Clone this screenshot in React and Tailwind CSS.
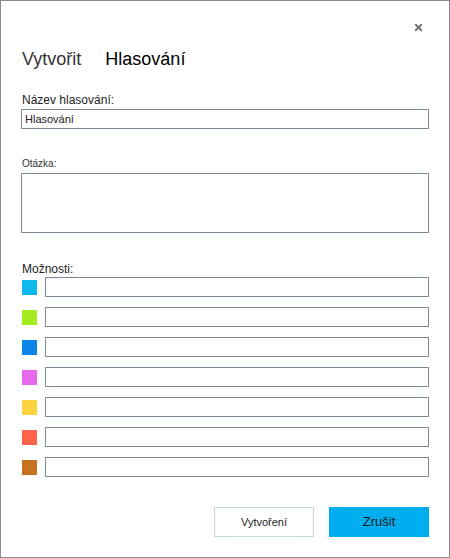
import { X } from 'lucide-react';

const optionColors = ['#0dbaeb', '#a4eb20', '#0a86ea', '#e46aeb', '#fdd440', '#ff634a', '#c7721f'];

const PollDialog = () => {
  return (
    <div className="w-[450px] h-[558px] border border-[#8a8a8a] bg-white font-['Liberation_Sans',Arial,sans-serif] text-[#222] flex flex-col">
      {/* Close */}
      <div className="flex justify-end pt-[21px] pr-[25px] h-[36px]">
        <X className="w-[11px] h-[11px] text-[#6f6f6f]" strokeWidth={4} />
      </div>

      {/* Title */}
      <div className="flex items-baseline gap-[24px] pl-[21px] mt-[11px] text-[18px] leading-[22px]">
        <span className="text-[#333]">Vytvořit</span>
        <span className="text-black">Hlasování</span>
      </div>

      <div className="px-[20px] mt-[23px] flex flex-col">
        {/* Poll name */}
        <label className="text-[12px] leading-[14px] pl-[1px] text-[#222]">Název hlasování:</label>
        <div className="mt-[2px] h-[20px] border border-[#7c8799] flex items-center pl-[3px] text-[11px]">
          Hlasování
        </div>

        {/* Question */}
        <label className="mt-[29px] text-[10px] leading-[12px] pl-[1px] text-[#333]">Otázka:</label>
        <div className="mt-[3px] h-[60px] border border-[#7c8799]" />

        {/* Options */}
        <label className="mt-[29px] text-[12px] leading-[14px] pl-[1px] text-[#222]">Možnosti:</label>
        <div className="mt-[1px] flex flex-col gap-[10px]">
          {optionColors.map((c) => (
            <div key={c} className="flex items-center gap-[8px] pl-[1px]">
              <div className="w-[15px] h-[15px]" style={{ backgroundColor: c }} />
              <div className="flex-1 h-[20px] border border-[#7c8799]" />
            </div>
          ))}
        </div>
      </div>

      {/* Actions */}
      <div className="mt-auto mb-[20px] flex justify-end gap-[15px] pr-[20px]">
        <button className="w-[100px] h-[30px] border border-[#c3dbe6] text-[11px] text-[#222]">Vytvoření</button>
        <button className="w-[100px] h-[30px] bg-[#00aeef] text-[13px] text-[#1a1a1a]">Zrušit</button>
      </div>
    </div>
  );
};

export default function App() {
  return <PollDialog />;
}
